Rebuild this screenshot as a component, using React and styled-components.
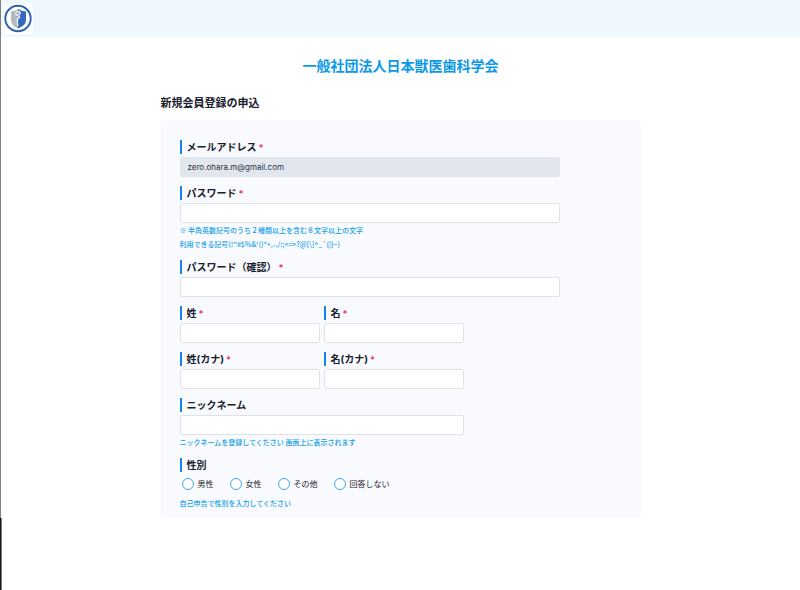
import React from 'react';
import styled, { createGlobalStyle } from 'styled-components';

const GlobalStyle = createGlobalStyle`
* {
box-sizing: border-box;
}
body {
margin: 0;
background-color: #fff;
color: #1a202c;
font-family: Inter, "Noto Sans CJK JP", sans-serif;
}
h1, h2, p, fieldset {
margin: 0;
}
`

const Page = styled.div`
min-height: 100vh;
padding-left: 1px;
`

const Edge = styled.div`
position: absolute;
top: 0;
bottom: 0;
left: 0;
display: flex;
flex-direction: column;
`

const EdgeTop = styled.div`
flex: 1;
width: 1px;
background-color: #808184;
`

const EdgeBottom = styled.div`
height: 72px;
width: 2px;
background-color: #1c1c20;
border-right: 1px solid #77777a;
`

const Header = styled.header`
display: flex;
align-items: center;
height: 37px;
padding: 0 2px;
background-color: #f0f8ff;
`

const LogoLink = styled.a`
display: flex;
background-color: #fff;
`

const Main = styled.main`
width: 480px;
max-width: 100%;
margin: 0 auto;
padding-top: 18px;
`

const Title = styled.h1`
color: #0b98e8;
font-size: 14px;
font-weight: 700;
line-height: 22px;
text-align: center;
`

const Subtitle = styled.h2`
margin-top: 18px;
font-size: 11px;
font-weight: 700;
line-height: 16px;
`

const Form = styled.form`
display: flex;
flex-direction: column;
align-items: flex-start;
gap: 9px;
margin-top: 10px;
padding: 19px 19px 8px;
background-color: #f8fafe;
`

const FieldBox = styled.div`
width: ${props => props.$width};
max-width: 100%;
`

const Row = styled.div`
display: grid;
grid-template-columns: 1fr 1fr;
gap: 4px;
width: 284px;
`

const Label = styled.label`
display: block;
margin-bottom: 3px;
padding-left: 5px;
border-left: 2px solid #1583ee;
font-size: 10px;
font-weight: 700;
line-height: 14px;
`

const Required = styled.span`
margin-left: 2px;
color: #f5316b;
font-size: 9px;
line-height: 1;
`

const Input = styled.input`
display: block;
width: 100%;
height: 20px;
padding: 0 7px;
background-color: #fff;
border: 1px solid #dfe2e7;
border-radius: 2px;
outline: none;
color: #2d3340;
font-family: inherit;
font-size: 8px;

&:read-only {
background-color: #e1e6ef;
border-color: #e1e6ef;
}
`

const Help = styled.p`
color: #129fe6;
font-family: "Noto Sans CJK JP", sans-serif;
font-size: 7px;
font-weight: 500;
line-height: 14px;
`

const Fieldset = styled.fieldset`
min-width: 0;
padding: 0;
border: none;
`

const Legend = styled(Label)`
width: 100%;
`

const Radios = styled.div`
display: flex;
gap: 16px;
padding: 3px 2px 6px;
`

const RadioLabel = styled.label`
display: flex;
align-items: center;
gap: 4px;
font-size: 8px;
line-height: 12px;
`

const Radio = styled.input`
appearance: none;
width: 12px;
height: 12px;
margin: 0;
background-color: #fff;
border: 1px solid #3fa9ea;
border-radius: 50%;

&:checked {
background-color: #1583ee;
box-shadow: inset 0 0 0 2px #fff;
}
`

const Logo = () => (
  <svg width='30' height='30' viewBox='0 0 30 30' aria-hidden='true'>
    <circle cx='15' cy='14.5' r='12.7' fill='#fff' stroke='#2d5fb0' strokeWidth='1.9'/>
    <path d='M8 7.500 Q12 7 15 5 V24.500 Q8 21.500 8 16Z' fill='#b4b9c1'/>
    <path d='M15 5 Q18 7 23 7.500 V16 Q23 21.500 15 24.500Z' fill='#3568bd'/>
    <path d='M12 9 L14 6.500 L17 7 L18 9.500 L16.500 11.500 L17.500 14 L15.500 14.500 L15 18 L15.500 22 L14 21.500 L13.500 16 L14.500 12 L12.500 11.500Z' fill='#e9edf3'/>
    <path d='M13.500 9.500 L15 8.500 L15.500 10.500 M14 13 L15.500 12' fill='none' stroke='#5277b3' strokeWidth='0.9'/>
  </svg>
)

const Field = (props) => {

    const { id, label, required, width, help = [], ...rest } = props

    return (

        <FieldBox $width={width || '100%'}>
            <Label htmlFor={id}>
              {label}
              {required && <Required>*</Required>}
            </Label>
            <Input id={id} name={id} {...rest}/>
            {help.map(text => <Help key={text}>{text}</Help>)}
        </FieldBox>

    )

}

const genders = ['男性', '女性', 'その他', '回答しない']

function App() {

  return <Page>
    <GlobalStyle/>
    <Header>
      <LogoLink href='#'>
        <Logo/>
      </LogoLink>
    </Header>
    <Main>
      <Title>一般社団法人日本獣医歯科学会</Title>
      <Subtitle>新規会員登録の申込</Subtitle>
      <Form>
        <Field
          id='email'
          type='email'
          label='メールアドレス'
          width='380px'
          defaultValue='zero.ohara.m@gmail.com'
          readOnly
          required
        />
        <Field
          id='password'
          type='password'
          label='パスワード'
          width='380px'
          help={[
            '※ 半角英数記号のうち２種類以上を含む８文字以上の文字',
            '利用できる記号(!"#$%&\'()*+,-./:;<=>?@[\\]^_`{|}~)'
          ]}
          required
        />
        <Field id='confirm' type='password' label='パスワード（確認）' width='380px' required/>
        <Row>
          <Field id='lastName' label='姓' required/>
          <Field id='firstName' label='名' required/>
        </Row>
        <Row>
          <Field id='lastKana' label='姓(カナ)' required/>
          <Field id='firstKana' label='名(カナ)' required/>
        </Row>
        <Field
          id='nickname'
          label='ニックネーム'
          width='284px'
          help={['ニックネームを登録してください 画面上に表示されます']}
        />
        <Fieldset>
          <Legend as='legend'>性別</Legend>
          <Radios>
            {genders.map(gender => (
              <RadioLabel key={gender}>
                <Radio type='radio' name='gender' value={gender}/>
                {gender}
              </RadioLabel>
            ))}
          </Radios>
          <Help>自己申告で性別を入力してください</Help>
        </Fieldset>
      </Form>
    </Main>
    <Edge>
      <EdgeTop/>
      <EdgeBottom/>
    </Edge>
  </Page>

}

export default App;
